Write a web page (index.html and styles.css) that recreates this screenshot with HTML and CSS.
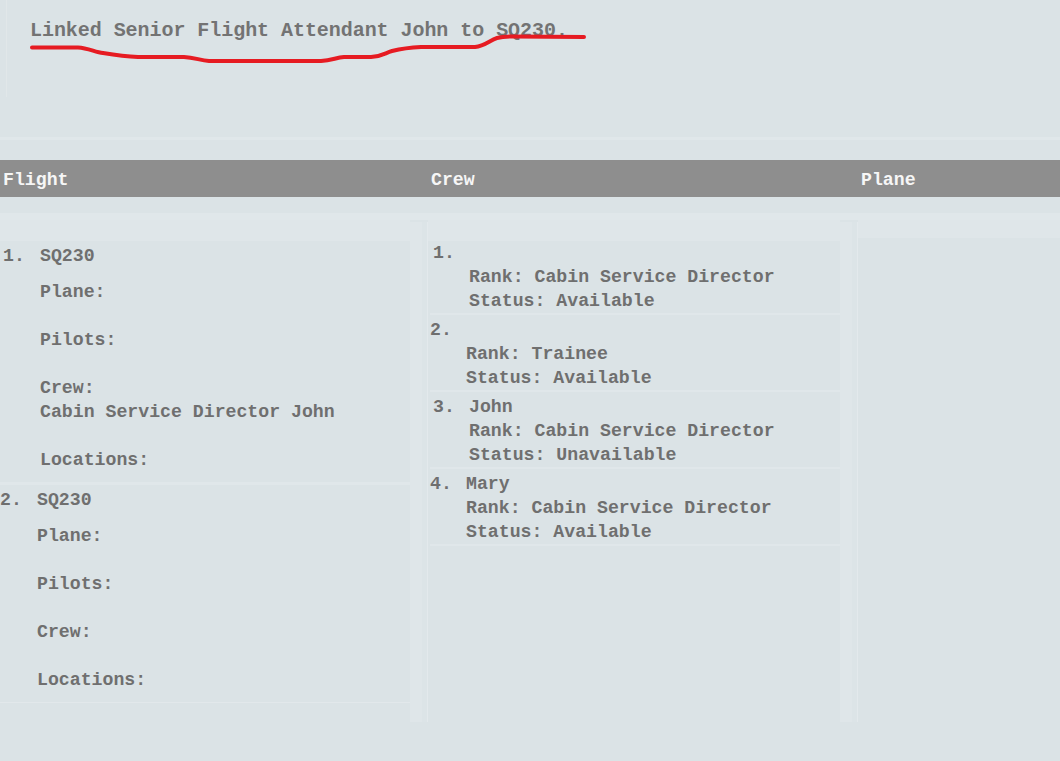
FILE: index.html
```html
<!DOCTYPE html>
<html>
<head>
<meta charset="utf-8">
<link rel="stylesheet" href="styles.css">
</head>
<body>
<div class="app">
  <section class="result">
    <div class="result-box">
      <p class="result-text">Linked Senior Flight Attendant John to SQ230.</p>
    </div>
    <svg class="scribble" width="600" height="70" viewBox="0 0 600 70">
      <path d="M32 47.5 L78 47.5 C88 48 95 52 103 53 C115 55 125 56.5 138 57 L184 57 C195 57.5 200 60.5 209 61 L321 61 C332 60.5 336 57.5 344 57 L371 57 C382 56.5 385 53 392 51 C402 48.5 410 47.5 421 47 L475 47 C485 46 490 40 497 38 C503 36.5 508 36.5 513 36.5 L584 37" fill="none" stroke="#e61b22" stroke-width="4" stroke-linecap="round" stroke-linejoin="round"/>
    </svg>
  </section>
  <div class="band band-a"></div>
  <header class="table-head">
    <div class="th">Flight</div>
    <div class="th">Crew</div>
    <div class="th">Plane</div>
  </header>
  <div class="band band-b"></div>
  <main class="panels">
    <div class="list flights">
      <article class="flight-card">
        <div class="row"><span class="num">1.</span><span class="body">SQ230</span></div>
        <div class="fields">
          <div class="field"><div class="label">Plane:</div></div>
          <div class="field"><div class="label">Pilots:</div></div>
          <div class="field"><div class="label">Crew:</div><div class="value">Cabin Service Director John</div></div>
          <div class="field"><div class="label">Locations:</div></div>
        </div>
      </article>
      <article class="flight-card shift">
        <div class="row"><span class="num">2.</span><span class="body">SQ230</span></div>
        <div class="fields">
          <div class="field"><div class="label">Plane:</div></div>
          <div class="field"><div class="label">Pilots:</div></div>
          <div class="field"><div class="label">Crew:</div></div>
          <div class="field"><div class="label">Locations:</div></div>
        </div>
      </article>
    </div>
    <div class="strip"></div>
    <div class="list crew">
      <article class="crew-card">
        <div class="row"><span class="num">1.</span><span class="body"></span></div>
        <div class="row"><span class="num"></span><span class="body">Rank: Cabin Service Director</span></div>
        <div class="row"><span class="num"></span><span class="body">Status: Available</span></div>
      </article>
      <article class="crew-card shift">
        <div class="row"><span class="num">2.</span><span class="body"></span></div>
        <div class="row"><span class="num"></span><span class="body">Rank: Trainee</span></div>
        <div class="row"><span class="num"></span><span class="body">Status: Available</span></div>
      </article>
      <article class="crew-card">
        <div class="row"><span class="num">3.</span><span class="body">John</span></div>
        <div class="row"><span class="num"></span><span class="body">Rank: Cabin Service Director</span></div>
        <div class="row"><span class="num"></span><span class="body">Status: Unavailable</span></div>
      </article>
      <article class="crew-card shift">
        <div class="row"><span class="num">4.</span><span class="body">Mary</span></div>
        <div class="row"><span class="num"></span><span class="body">Rank: Cabin Service Director</span></div>
        <div class="row"><span class="num"></span><span class="body">Status: Available</span></div>
      </article>
    </div>
    <div class="strip"></div>
    <div class="list planes"></div>
  </main>
</div>
</body>
</html>
```

FILE: styles.css
```css
* { box-sizing: border-box; }

html, body {
  margin: 0;
  padding: 0;
  background: #dbe3e6;
}

body {
  width: 1060px;
  height: 761px;
  overflow: hidden;
  font-family: "Liberation Mono", "Courier New", monospace;
  font-weight: bold;
  color: #6f6f6f;
}

.result {
  position: relative;
  height: 137px;
}

.result-box {
  margin-left: 6px;
  height: 97px;
  border-left: 1px solid #e1e7e9;
  padding: 19px 0 0 23px;
}

.result-text {
  margin: 0;
  font-size: 20px;
  line-height: 24px;
  letter-spacing: -0.05px;
  color: #737373;
}

.scribble {
  position: absolute;
  left: 0;
  top: 0;
}

.band-a {
  height: 3px;
  background: #e0e7ea;
  margin-bottom: 20px;
}

.table-head {
  display: grid;
  grid-template-columns: 428px 430px 1fr;
  height: 37px;
  padding-top: 8px;
  background: #8e8e8e;
}

.th {
  padding-left: 3px;
  font-size: 18.2px;
  line-height: 24px;
  color: #f6f6f6;
}

.band-b {
  height: 7px;
  margin-top: 16px;
  background: #e0e7ea;
}

.panels {
  display: grid;
  grid-template-columns: 410px 18px 412px 18px 1fr;
  height: 502px;
  font-size: 18.2px;
  line-height: 24px;
}

.list {
  background: linear-gradient(#dfe6e9, #dfe6e9) top / 100% 21px no-repeat;
}

.flights {
  padding-top: 21px;
}

.crew {
  padding-top: 18px;
}

.planes {
  background-size: 100% 18px;
}

.row {
  display: grid;
  grid-template-columns: 36px 1fr;
  height: 24px;
  white-space: pre;
}

.flight-card {
  padding: 3px 0 10px 3px;
  border-bottom: 3px solid #e0e7ea;
}

.flight-card .row {
  grid-template-columns: 37px 1fr;
}

.flight-card.shift {
  padding-left: 0;
  border-bottom: 1px solid #e2e8eb;
}

.fields {
  margin-top: 12px;
  padding-left: 37px;
}

.field {
  margin-bottom: 24px;
}

.field:last-child {
  margin-bottom: 0;
}

.label, .value {
  height: 24px;
  white-space: pre;
}

.crew-card {
  margin-left: 2px;
  padding: 3px 0 0 3px;
  border-bottom: 2px solid #e0e7ea;
}

.crew-card.shift {
  padding-left: 0;
}

.strip {
  margin-top: 2px;
  background: linear-gradient(to right, #dfe6e9 0 12px, #dce4e7 12px 17px, #e3e9ec 17px 18px);
}
```
